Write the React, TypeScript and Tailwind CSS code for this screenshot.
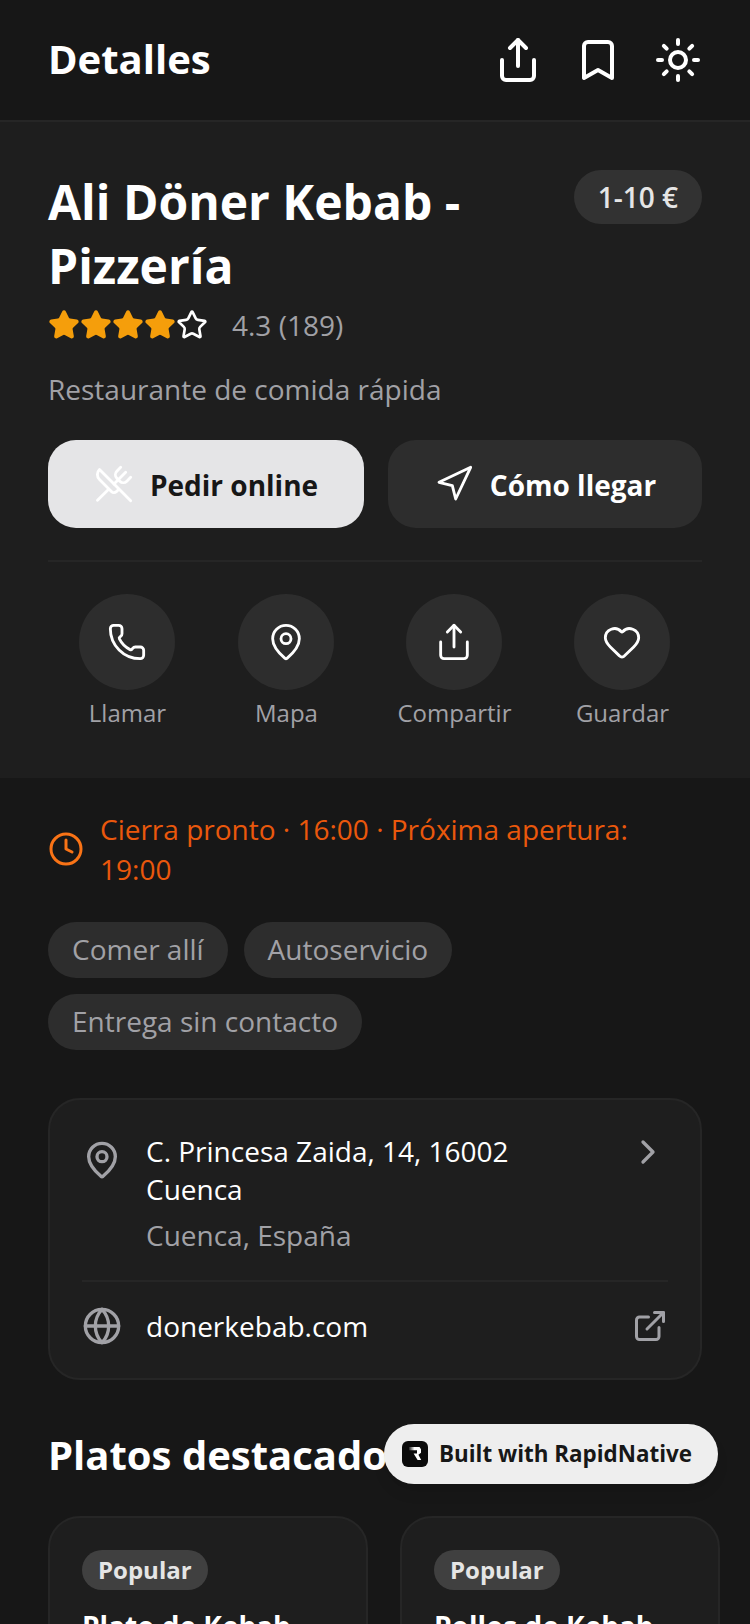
import { Share, Bookmark, Sun, UtensilsCrossed, Navigation, Phone, MapPin, Heart, Clock, ChevronRight, Globe, ExternalLink, Star } from "lucide-react";

const actions = [
  { label: "Llamar", Icon: Phone },
  { label: "Mapa", Icon: MapPin },
  { label: "Compartir", Icon: Share },
  { label: "Guardar", Icon: Heart },
];

function Dish({ name }: { name: string }) {
  return (
    <div className="w-[320px] shrink-0 rounded-[32px] border-2 border-[#262626] bg-[#1e1e1e] p-[32px]">
      <span className="inline-block rounded-full bg-[#404040] px-[16px] py-[2px] text-[24px] leading-[36px] font-bold text-[#e5e5e5]">Popular</span>
      <p className="mt-[16px] text-[28px] leading-[40px] font-bold text-white">{name}</p>
    </div>
  );
}

export default function App() {
  return (
    <div className="relative h-[1624px] w-[750px] overflow-hidden bg-[#171717] font-['Open_Sans',sans-serif]">
      <header className="flex h-[122px] items-center justify-between border-b-2 border-[#262626] px-[48px]">
        <h1 className="pb-[2px] text-[40px] font-bold text-white">Detalles</h1>
        <div className="flex items-center gap-[32px] text-white">
          <Share size={48} strokeWidth={2} />
          <Bookmark size={48} strokeWidth={2} />
          <Sun size={48} strokeWidth={2} />
        </div>
      </header>

      <section className="h-[656px] bg-[#1e1e1e] px-[48px] pt-[48px]">
        <div className="flex items-start justify-between gap-[24px]">
          <h2 className="text-[48px] leading-[64px] font-bold text-white">Ali Döner Kebab - Pizzería</h2>
          <span className="shrink-0 rounded-full bg-[#323232] px-[24px] py-[8px] text-[28px] leading-[38px] font-semibold text-[#e5e5e5]">1-10 €</span>
        </div>
        <div className="mt-[7px] flex items-center">
          <div className="flex">
            {[0, 1, 2, 3].map((i) => (
              <Star key={i} size={32} className="fill-[#f59e0b] text-[#f59e0b]" />
            ))}
            <Star size={32} className="text-white" />
          </div>
          <span className="ml-[24px] text-[28px] leading-[40px] text-[#a1a1a6]">4.3 (189)</span>
        </div>
        <p className="mt-[24px] text-[28px] leading-[40px] text-[#a1a1a6]">Restaurante de comida rápida</p>
        <div className="mt-[31px] flex gap-[24px]">
          <button className="flex h-[88px] w-[316px] items-center justify-center gap-[16px] rounded-[28px] bg-[#e5e5e7] text-[28px] font-bold text-[#171717]">
            <UtensilsCrossed size={40} strokeWidth={1.7} className="text-white" />
            <span className="pt-[2px]">Pedir online</span>
          </button>
          <button className="flex h-[88px] flex-1 items-center justify-center gap-[16px] rounded-[28px] bg-[#2d2d2d] text-[28px] font-bold text-white">
            <Navigation size={40} strokeWidth={1.7} />
            <span className="pt-[2px]">Cómo llegar</span>
          </button>
        </div>
        <div className="mt-[32px] flex justify-around border-t-2 border-[#262626] pt-[32px]">
          {actions.map(({ label, Icon }) => (
            <div key={label} className="flex flex-col items-center gap-[5px]">
              <div className="flex h-[96px] w-[96px] items-center justify-center rounded-full bg-[#2d2d2d] text-white">
                <Icon size={40} strokeWidth={1.7} />
              </div>
              <span className="text-[24px] leading-[36px] text-[#a1a1a6]">{label}</span>
            </div>
          ))}
        </div>
      </section>

      <section className="px-[48px] pt-[31px]">
        <div className="flex items-center gap-[16px]">
          <Clock size={36} className="shrink-0 text-[#f97316]" />
          <p className="text-[28px] leading-[40px] text-[#ea580c]">Cierra pronto · 16:00 · Próxima apertura: 19:00</p>
        </div>
        <div className="mt-[33px] flex flex-wrap gap-[16px]">
          {["Comer allí", "Autoservicio", "Entrega sin contacto"].map((t) => (
            <span key={t} className="rounded-full bg-[#2d2d2d] px-[24px] pt-[7px] pb-[9px] text-[28px] leading-[40px] text-[#a1a1a6]">{t}</span>
          ))}
        </div>
        <div className="mt-[48px] rounded-[32px] border-2 border-[#262626] bg-[#1e1e1e] p-[32px]">
          <div className="flex items-start gap-[24px] pb-[26px]">
            <MapPin size={40} className="mt-[8px] shrink-0 text-[#a1a1a6]" />
            <div className="flex-1">
              <p className="w-[400px] text-[28px] leading-[38px] text-white">C. Princesa Zaida, 14, 16002 Cuenca</p>
              <p className="mt-[8px] text-[28px] leading-[38px] text-[#a1a1a6]">Cuenca, España</p>
            </div>
            <ChevronRight size={40} className="text-[#a1a1a6]" />
          </div>
          <div className="flex items-center gap-[24px] border-t-2 border-[#262626] pt-[24px]">
            <Globe size={40} className="shrink-0 text-[#a1a1a6]" />
            <p className="flex-1 text-[28px] leading-[40px] text-white">donerkebab.com</p>
            <ExternalLink size={36} className="text-[#a1a1a6]" />
          </div>
        </div>
        <h3 className="mt-[47px] text-[40px] leading-[56px] font-bold text-white">Platos destacados</h3>
        <div className="mt-[33px] flex gap-[32px]">
          <Dish name="Plato de Kebab" />
          <Dish name="Pollos de Kebab" />
        </div>
      </section>

      <div className="absolute top-[1424px] left-[384px] flex h-[60px] w-[334px] items-center gap-[11px] rounded-full bg-[#eeeeee] pl-[18px] shadow-lg">
        <svg width="26" height="26" viewBox="0 0 26 26">
          <defs>
            <linearGradient id="rn" x1="0" y1="0" x2="1" y2="0">
              <stop offset="0" stopColor="#222222" />
              <stop offset="0.45" stopColor="#ffffff" />
            </linearGradient>
          </defs>
          <rect width="26" height="26" rx="6" fill="#0a0a0a" />
          <path d="M7 6h10.5l1.5 2.2v3.6l-2.6 2 2.8 5.2h-3.6l-4-6.5h3.4v-3.2H7z" fill="url(#rn)" />
        </svg>
        <span className="text-[22.4px] font-bold text-[#171717]">Built with RapidNative</span>
      </div>
    </div>
  );
}
